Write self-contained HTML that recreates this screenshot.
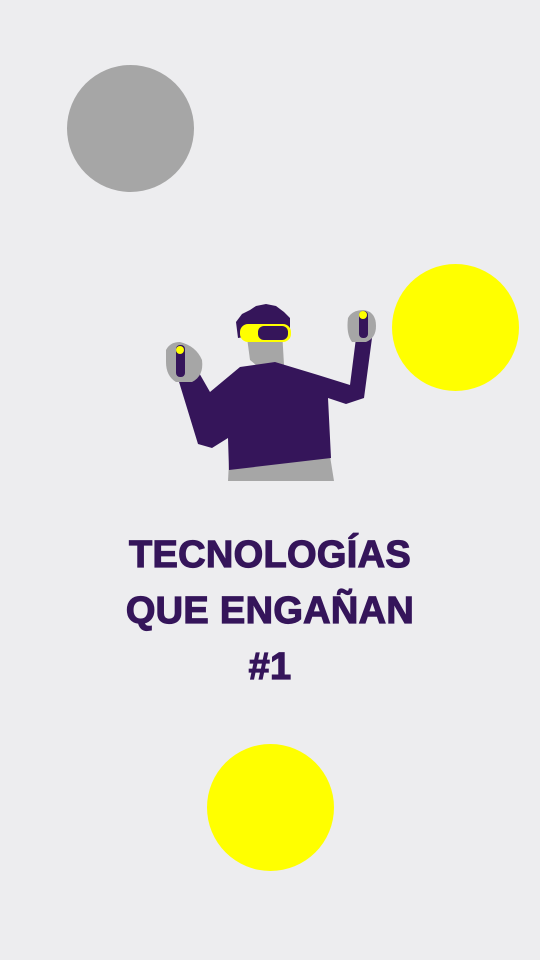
<!DOCTYPE html>
<html><head><style>
html,body{margin:0;padding:0}
body{width:540px;height:960px;background:#ededef;position:relative;overflow:hidden;font-family:"Liberation Sans",sans-serif}
.c{position:absolute;border-radius:50%}
.t{position:absolute;left:0;width:540px;text-align:center;color:#35155a;font-weight:bold;font-size:38px;line-height:56px;top:527px;-webkit-text-stroke:1.2px #35155a;letter-spacing:0.3px}
</style></head><body>
<div class="c" style="left:67px;top:65px;width:127px;height:127px;background:#a6a6a6"></div>
<div class="c" style="left:392px;top:264px;width:127px;height:127px;background:#ffff00"></div>
<div class="c" style="left:207px;top:744px;width:127px;height:127px;background:#ffff00"></div>
<svg style="position:absolute;left:0;top:0" width="540" height="960">
<path d="M229 462 L330 456 L334 481 L228 481 Z" fill="#a6a6a6"/>
<path d="M246 330 L282 330 L284 365 L262 370 L250 360 Z" fill="#a6a6a6"/>
<path d="M176 372 L198 371 L210 392 L240 367 L275 362 L318 375 L350 385 L356 338 L372 338 L364 398 L346 404 L328 398 L331 458 L229 470 L228 438 L212 448 L198 444 Z" fill="#35155a"/>
<path d="M238 338 L236 322 L242 314 L250 310 L256 306 L266 304 L276 306 L284 312 L290 318 L290 328 L250 336 Z" fill="#35155a"/>
<rect x="240" y="324" width="51" height="18" rx="8" fill="#ffff00"/>
<rect x="258" y="326" width="30" height="14" rx="6" fill="#35155a"/>
<path d="M166 350 Q170 342 180 342 Q196 346 202 360 Q204 376 192 382 L176 382 Q166 376 166 362 Z" fill="#a6a6a6"/>
<path d="M348 318 Q352 310 364 310 Q376 312 376 326 Q376 338 366 342 L352 342 Q346 334 348 318 Z" fill="#a6a6a6"/>
<rect x="176" y="345" width="9" height="32" rx="4" fill="#35155a"/>
<circle cx="180" cy="350" r="4" fill="#ffff00"/>
<rect x="359" y="311" width="9" height="27" rx="4" fill="#35155a"/>
<circle cx="363" cy="315" r="4" fill="#ffff00"/>
</svg>
<div class="t">TECNOLOGÍAS<br>QUE ENGAÑAN<br>#1</div>
</body></html>
